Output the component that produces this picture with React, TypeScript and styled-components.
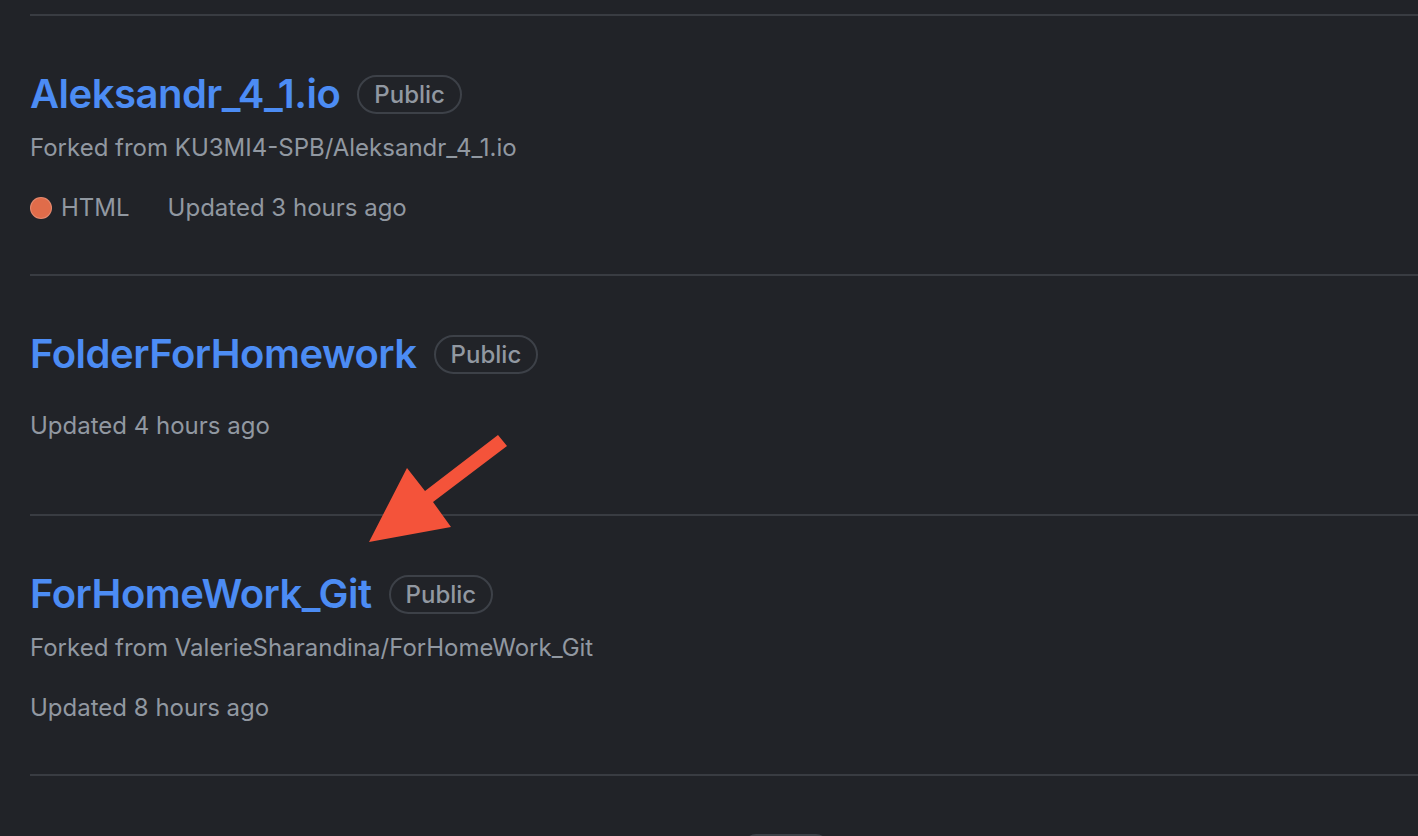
import React from "react";
import styled, { createGlobalStyle } from "styled-components";

const Global = createGlobalStyle`
  html, body {
    margin: 0;
    padding: 0;
    background: #212328;
    overflow: hidden;
  }
  body {
    font-family: Inter, "Noto Sans", "Liberation Sans", sans-serif;
    -webkit-font-smoothing: antialiased;
  }
`;

const Page = styled.div`
  position: relative;
  padding: 14px 0 0 30px;
  height: 836px;
  box-sizing: border-box;
`;

const List = styled.ul`
  list-style: none;
  margin: 0;
  padding: 0;
  border-bottom: 2px solid #393c42;
`;

const Item = styled.li<{ $tall: boolean }>`
  border-top: 2px solid #393c42;
  height: ${(p) => (p.$tall ? 260 : 240)}px;
  padding-top: 54px;
  box-sizing: border-box;
  display: flex;
  flex-direction: column;
  align-items: flex-start;
`;

const TitleRow = styled.div`
  display: flex;
  align-items: center;
  height: 48px;
  gap: 17px;
`;

const RepoName = styled.a`
  font-size: 40px;
  font-weight: 600;
  color: #4c8cf4;
  text-decoration: none;
  letter-spacing: -0.5px;
  line-height: 48px;
`;

const Badge = styled.span`
  display: inline-flex;
  align-items: center;
  height: 39px;
  box-sizing: border-box;
  padding: 0 15px;
  border: 2px solid #3d4148;
  border-radius: 999px;
  font-size: 24px;
  font-weight: 500;
  color: #9198a1;
`;

const ForkLine = styled.div`
  margin-top: 12px;
  font-size: 24px;
  line-height: 36px;
  color: #9198a1;
`;

const Meta = styled.div<{ $gap: number }>`
  margin-top: ${(p) => p.$gap}px;
  display: flex;
  align-items: center;
  font-size: 24px;
  line-height: 36px;
  color: #9198a1;
`;

const Lang = styled.span`
  display: inline-flex;
  align-items: center;
  gap: 9px;
  margin-right: 38px;
`;

const Dot = styled.span<{ $color: string }>`
  width: 22px;
  height: 22px;
  border-radius: 50%;
  background: ${(p) => p.$color};
  box-sizing: border-box;
  border: 1.5px solid rgba(255, 255, 255, 0.2);
`;

const Footer = styled.div`
  display: flex;
  justify-content: center;
  padding-top: 58px;
  padding-left: 124px;
`;

const PagerButton = styled.div`
  width: 80px;
  height: 40px;
  border-radius: 12px;
  background: #2a2e35;
  border: 2px solid #3d4148;
`;

const Arrow = styled.svg`
  position: absolute;
  left: 0;
  top: 0;
  pointer-events: none;
`;

type Repo = {
  name: string;
  fork?: string;
  lang?: { name: string; color: string };
  updated: string;
};

const repos: Repo[] = [
  {
    name: "Aleksandr_4_1.io",
    fork: "KU3MI4-SPB/Aleksandr_4_1.io",
    lang: { name: "HTML", color: "#e06c4a" },
    updated: "Updated 3 hours ago",
  },
  { name: "FolderForHomework", updated: "Updated 4 hours ago" },
  {
    name: "ForHomeWork_Git",
    fork: "ValerieSharandina/ForHomeWork_Git",
    updated: "Updated 8 hours ago",
  },
];

export default function App() {
  return (
    <>
      <Global />
      <Page>
        <List>
          {repos.map((r) => (
            <Item key={r.name} $tall={!!r.fork}>
              <TitleRow>
                <RepoName href="#">{r.name}</RepoName>
                <Badge>Public</Badge>
              </TitleRow>
              {r.fork && <ForkLine>Forked from {r.fork}</ForkLine>}
              <Meta $gap={r.fork ? 24 : 30}>
                {r.lang && (
                  <Lang>
                    <Dot $color={r.lang.color} />
                    {r.lang.name}
                  </Lang>
                )}
                {r.updated}
              </Meta>
            </Item>
          ))}
        </List>
        <Footer>
          <PagerButton />
        </Footer>
        <Arrow width="1418" height="836" viewBox="0 0 1418 836">
          <polygon
            points="498,435 507,446 433,502 451,527 369,542 407,468 425,491"
            fill="#f4533a"
          />
        </Arrow>
      </Page>
    </>
  );
}
